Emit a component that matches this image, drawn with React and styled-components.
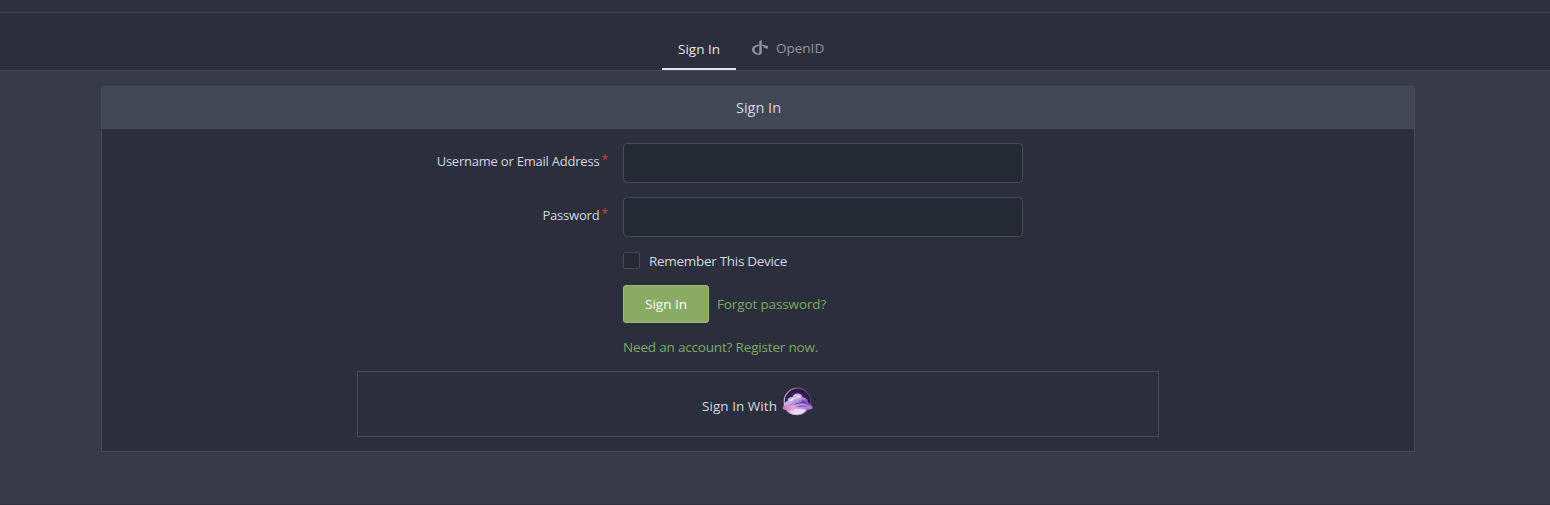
import React from 'react';
import styled, { createGlobalStyle } from 'styled-components';

const GlobalStyle = createGlobalStyle`
  * { box-sizing: border-box; }
  body {
    margin: 0;
    background: #383b47;
    color: #d3d8e0;
    font-family: "Open Sans", "Noto Sans", sans-serif;
    font-size: 13.5px;
    line-height: 20px;
  }
`;

const Page = styled.div`
  height: 505px;
  overflow: hidden;
  border-bottom: 1px solid #2f333d;
`;

const TopStrip = styled.header`
  height: 13px;
  background: #2f323e;
  border-bottom: 1px solid #474b56;
`;

const Tabs = styled.nav`
  display: flex;
  align-items: flex-end;
  height: 58px;
  padding-left: 662px;
  background: #2b2e3b;
  border-bottom: 1px solid #474b56;
`;

const Tab = styled.a`
  display: flex;
  align-items: center;
  height: 43px;
  padding: 2px 16px 0;
  width: ${(p) => (p.$active ? '74px' : 'auto')};
  color: ${(p) => (p.$active ? '#e3e6ed' : '#9396a0')};
  border-bottom: 2px solid ${(p) => (p.$active ? '#dfe4f0' : 'transparent')};
  padding-bottom: ${(p) => (p.$active ? '0' : '2px')};
  white-space: nowrap;

  svg { margin-right: 8px; }
`;

const Label = styled.span`
  letter-spacing: ${(p) => p.$track || 0}px;
  white-space: nowrap;
`;

const Card = styled.main`
  width: 1314px;
  height: 366px;
  margin: 15px 0 0 101px;
  background: #2b2e3b;
  border: 1px solid #474b56;
  border-radius: 3px 3px 0 0;
`;

const CardTitle = styled.h1`
  height: 42px;
  margin: 0;
  padding: 11px 0 0 1px;
  background: #424853;
  border-bottom: 1px solid #474b56;
  border-radius: 2px 2px 0 0;
  font-size: 14.5px;
  font-weight: 400;
  text-align: center;
`;

const Form = styled.form`
  padding-top: 14px;
`;

const Field = styled.div`
  display: flex;
  margin-bottom: 14px;
`;

const FieldLabel = styled.label`
  display: flex;
  justify-content: flex-end;
  width: 506px;
  margin-right: 15px;
  padding-top: 8px;
  font-size: 13px;
`;

const Required = styled.span`
  margin-left: 2px;
  color: #c9423f;
  font-size: 12px;
  line-height: 18px;
`;

const Input = styled.input`
  width: 400px;
  height: 40px;
  padding: 0 10px;
  color: inherit;
  font: inherit;
  background: #232a33;
  border: 1px solid #474b56;
  border-radius: 4px;
  outline: none;
`;

const Line = styled.div`
  display: flex;
  align-items: center;
  height: ${(p) => p.$height}px;
  margin: 0 0 ${(p) => p.$gap}px 521px;
`;

const Checkbox = styled.input`
  appearance: none;
  width: 17px;
  height: 17px;
  margin: 0 9px 1px 0;
  background: #232a33;
  border: 1px solid #474b56;
  border-radius: 2px;
`;

const Submit = styled.button`
  width: 86px;
  height: 38px;
  margin-right: 8px;
  padding: 0;
  color: #fff;
  font: inherit;
  background: #89ab63;
  border: 1px solid #9cbb77;
  border-radius: 3px;
`;

const Link = styled.a`
  color: #7aab62;
`;

const Providers = styled.section`
  display: flex;
  justify-content: center;
  width: 802px;
  height: 66px;
  margin-left: 255px;
  padding: 15px 1px 0 0;
  border: 1px solid #474b56;

  span { padding-top: 9px; }
  svg { margin-left: 5px; }
`;

const OpenIdIcon = () => (
  <svg width="16" height="15" viewBox="0 48 448 416" preserveAspectRatio="none">
    <path d="M271.5 432l-68 32C88.500 453.700 0 392.500 0 318.200c0-71.500 82.500-131 191.700-144.300v43c-71.500 12.500-124 53-124 101.300 0 51 58.500 93.300 135.700 103v-340l68-33.200v384zM448 291l-131.300-28.500 36.800-20.700c-19.500-11.500-43.500-20-70-24.800v-43c46.200 5.500 87.700 19.500 120.300 39.300l35-19.800L448 291z" fill="#9396a0" />
  </svg>
);

const CloudLogo = () => (
  <svg width="31" height="30" viewBox="0 0 31 30">
    <defs>
      <linearGradient id="ring" x1="0" y1="0" x2="1" y2="0">
        <stop offset="0" stopColor="#c4b5c8" />
        <stop offset=".5" stopColor="#6d5585" />
        <stop offset="1" stopColor="#4a4058" />
      </linearGradient>
      <linearGradient id="cloud" x1="0" y1="0" x2="1" y2=".8">
        <stop offset="0" stopColor="#c9c4e8" />
        <stop offset=".45" stopColor="#c6b2e2" />
        <stop offset=".75" stopColor="#8a62c8" />
        <stop offset="1" stopColor="#7648a8" />
      </linearGradient>
      <linearGradient id="base" x1="0" y1="0" x2="1" y2="0">
        <stop offset="0" stopColor="#d773b4" />
        <stop offset=".35" stopColor="#dba6dd" />
        <stop offset=".65" stopColor="#b68be0" />
        <stop offset="1" stopColor="#a677cd" />
      </linearGradient>
    </defs>
    <circle cx="15.500" cy="14.500" r="13.300" fill="#2b1944" stroke="url(#ring)" strokeWidth="1.200" />
    <path d="M4 11Q8 5 15 5q7 0 11 6v7H4z" fill="#3c1b61" />
    <path d="M1.500 20c0-3 1-5 4-6 0-2.500 2-4 5-4 1-3 3.500-4 6-3.500 2.500.500 4 2 4 4 3 0 5.500 2 5.500 5 2.500.500 4 2.500 4.500 4.500z" fill="url(#cloud)" />
    <path d="M14 16q4 1 7-3 3 1 4 4-6-1-8 2-3 1-6 0 3-1 3-3z" fill="#6a3fb2" />
    <path d="M7 14q3-4 8-3-4 0-5 3zM14 9q4-1 5 2l-4-1z" fill="#eee5f8" />
    <path d="M.5 21q2-3 6-3 5 1 9-1 6-2 10 1 4 0 5.500 3-2 2-5.500 1.500-4 5.500-11 5.500-8 0-10.500-5-3 0-3.500-2z" fill="url(#base)" />
    <path d="M7 24q2-1 4 0 2-3 5-2 4-1 8 1-3 4.500-9 4.500-5 0-8-3.500z" fill="#eddcf0" />
    <path d="M14 20q5-3 12 0-5-1-12 0z" fill="#6540b4" />
  </svg>
);

export default function App() {
  return (
    <>
      <GlobalStyle />
      <Page>
        <TopStrip />
        <Tabs>
          <Tab $active><Label>Sign In</Label></Tab>
          <Tab><OpenIdIcon /><Label>OpenID</Label></Tab>
        </Tabs>
        <Card>
          <CardTitle>Sign In</CardTitle>
          <Form>
            <Field>
              <FieldLabel htmlFor="user"><Label $track={-0.22}>Username or Email Address</Label><Required>*</Required></FieldLabel>
              <Input id="user" />
            </Field>
            <Field>
              <FieldLabel htmlFor="password"><Label $track={-0.2}>Password</Label><Required>*</Required></FieldLabel>
              <Input id="password" type="password" />
            </Field>
            <Line $height={20} $gap={14}>
              <Checkbox id="remember" type="checkbox" />
              <label htmlFor="remember"><Label $track={-0.3}>Remember This Device</Label></label>
            </Line>
            <Line $height={38} $gap={14}>
              <Submit type="button"><Label>Sign In</Label></Submit>
              <Link><Label $track={-0.13}>Forgot password?</Label></Link>
            </Line>
            <Line $height={20} $gap={14}>
              <Link><Label $track={-0.18}>Need an account? Register now.</Label></Link>
            </Line>
            <Providers>
              <Label $track={0.04}>Sign In With</Label>
              <CloudLogo />
            </Providers>
          </Form>
        </Card>
      </Page>
    </>
  );
}
